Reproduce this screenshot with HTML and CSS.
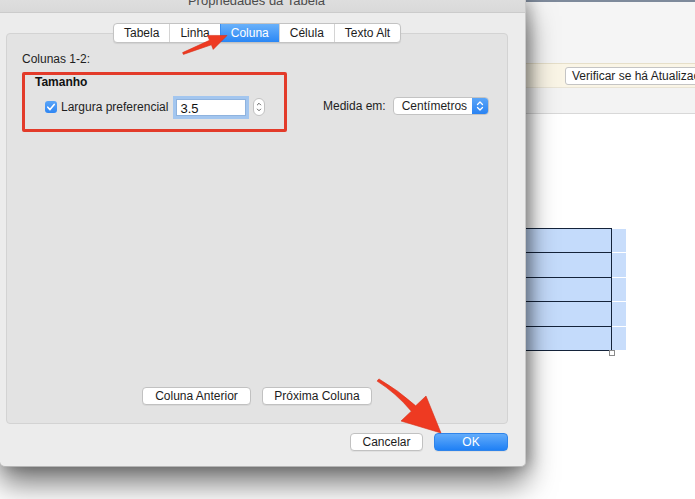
FILE: index.html
```html
<!DOCTYPE html>
<html lang="pt-BR">
<head>
    <meta charset="UTF-8">
    <meta name="viewport" content="width=device-width, initial-scale=1.0">
    <title>Propriedades da Tabela</title>
    <link rel="stylesheet" href="styles.css">
</head>
<body>
    <div class="screen">
        <div class="dialog">
            <div class="titlebar"><span>Propriedades da Tabela</span></div>

            <div class="tabs">
                <span class="tab">Tabela</span>
                <span class="tab">Linha</span>
                <span class="tab active">Coluna</span>
                <span class="tab">Célula</span>
                <span class="tab">Texto Alt</span>
            </div>

            <div class="panel">
                <p class="caption">Colunas 1-2:</p>

                <div class="size-row">
                    <div class="size-group">
                        <div class="group-title">Tamanho</div>
                        <div class="field-row">
                            <span class="check">
                                <svg width="12" height="12" viewBox="0 0 12 12"><path d="M2.8 6.2 L5 8.6 L9.2 3.4" fill="none" stroke="#fff" stroke-width="1.6" stroke-linecap="round" stroke-linejoin="round"/></svg>
                            </span>
                            <span class="label">Largura preferencial</span>
                            <span class="input">3.5</span>
                            <span class="stepper">
                                <svg width="12" height="18" viewBox="0 0 12 18"><path d="M4 6.5 L6 4.5 L8 6.5 M4 11.5 L6 13.5 L8 11.5" fill="none" stroke="#555" stroke-width="1.1" stroke-linecap="round" stroke-linejoin="round"/></svg>
                            </span>
                        </div>
                    </div>

                    <div class="measure">
                        <span class="label">Medida em:</span>
                        <span class="select">
                            <span class="select-text">Centímetros</span>
                            <span class="select-arrows">
                                <svg width="16" height="18" viewBox="0 0 16 18"><path d="M5.5 7.5 L8 5 L10.5 7.5 M5.5 10.5 L8 13 L10.5 10.5" fill="none" stroke="#fff" stroke-width="1.3" stroke-linecap="round" stroke-linejoin="round"/></svg>
                            </span>
                        </span>
                    </div>
                </div>

                <div class="nav-buttons">
                    <span class="btn btn-prev">Coluna Anterior</span>
                    <span class="btn btn-next">Próxima Coluna</span>
                </div>
            </div>

            <div class="footer">
                <span class="btn btn-cancel">Cancelar</span>
                <span class="btn btn-ok">OK</span>
            </div>
        </div>

        <div class="document">
            <div class="doc-top"></div>
            <div class="update-bar"><span class="update-btn">Verificar se há Atualizações</span></div>
            <div class="doc-strip"></div>
            <div class="doc-page">
                <div class="table">
                    <div class="row"><span class="cell"></span><span class="extra"></span></div>
                    <div class="row"><span class="cell"></span><span class="extra"></span></div>
                    <div class="row"><span class="cell"></span><span class="extra"></span></div>
                    <div class="row"><span class="cell"></span><span class="extra"></span></div>
                    <div class="row"><span class="cell"></span><span class="extra"></span></div>
                    <div class="row last"><span class="cell"></span><span class="handle"></span></div>
                </div>
            </div>
        </div>

        <!-- setas de anotação -->
        <svg class="arrows" width="695" height="499" viewBox="0 0 695 499">
            <path d="M182.6 52.6 L209.5 40.3 L207.5 35.4 L227 35.5 L213.2 49.4 L211.4 44.8 L183.4 54.4 Z" fill="#ee3a22" stroke="#d9301a" stroke-width="0.6" stroke-linejoin="round"/>
            <path d="M377.1 381.1 Q396 393 411.3 411.2 L401 421 L441 433 L426 396 L415.7 405.8 Q398 390 378.9 378.9 Z" fill="#ee3a22" stroke="#d9301a" stroke-width="0.6" stroke-linejoin="round"/>
        </svg>
    </div>
</body>
</html>
```

FILE: styles.css
```css
body {
    margin: 0;
    background: #fff;
    font-family: "Liberation Sans", Arial, sans-serif;
    font-size: 12px;
    color: #222;
}
.screen {
    position: relative;
    display: flex;
    width: 695px;
    height: 499px;
    overflow: hidden;
    background: #fff;
}

/* janela de diálogo */
.dialog {
    position: relative;
    z-index: 2;
    display: flex;
    flex-direction: column;
    flex: none;
    width: 526px;
    height: 467px;
    background: #ececec;
    border-right: 1px solid #c9c9c9;
    border-bottom: 1px solid #b5b5b5;
    border-radius: 0 0 5px 5px;
    box-sizing: border-box;
    box-shadow: 0 16px 30px rgba(0, 0, 0, 0.55), 4px 0 14px rgba(0, 0, 0, 0.25);
}
.titlebar {
    height: 12px;
    overflow: hidden;
    padding-right: 12px;
    background: linear-gradient(#dedede, #d9d9d9);
    border-bottom: 1px solid #cbcbcb;
    text-align: center;
    color: #4b4b4b;
    font-size: 13px;
}
.titlebar span {
    display: block;
    line-height: 13px;
    margin-top: -6px;
}

.tabs {
    position: relative;
    z-index: 1;
    display: flex;
    align-self: flex-start;
    margin: 10px 0 0 113px;
    height: 18px;
    background: #fff;
    border: 1px solid #c3c3c3;
    border-radius: 4px;
    overflow: hidden;
    box-shadow: 0 1px 1px rgba(0, 0, 0, 0.08);
}
.tab {
    padding: 0 10px;
    line-height: 18px;
    border-left: 1px solid #d4d4d4;
    color: #1c1c1c;
}
.tab:first-child {
    border-left: none;
}
.tab.active {
    background: linear-gradient(#69b1fa, #2a87f5);
    border-left-color: #3a8ef0;
    color: #fff;
}

.panel {
    display: flex;
    flex-direction: column;
    width: 502px;
    height: 391px;
    margin: -10px 0 0 6px;
    padding: 18px 0 18px 15px;
    background: #e3e3e3;
    border: 1px solid #d3d3d3;
    border-radius: 4px;
    box-sizing: border-box;
}
.caption {
    margin: 0;
    line-height: 15px;
    color: #1e1e1e;
}

.size-row {
    display: flex;
    align-items: flex-start;
    margin-top: 5px;
}
.size-group {
    width: 265px;
    padding: 0 0 11px 10px;
    border: 3px solid #e33b2a;
    border-radius: 2px;
    box-sizing: border-box;
}
.group-title {
    font-weight: bold;
    line-height: 15px;
    color: #111;
}
.field-row {
    display: flex;
    align-items: center;
    height: 22px;
    margin: 6px 0 0 10px;
}
.check {
    display: flex;
    width: 12px;
    height: 12px;
    background: linear-gradient(#5aa5f8, #2f86f3);
    border-radius: 3px;
}
.label {
    line-height: 18px;
    color: #1e1e1e;
}
.field-row .label {
    margin-left: 4px;
}
.input {
    width: 70px;
    height: 17px;
    margin-left: 8px;
    padding-left: 3px;
    line-height: 17px;
    font-size: 13px;
    color: #111;
    background: #fff;
    border: 1px solid #8fb3de;
    box-sizing: border-box;
    box-shadow: 0 0 0 3px #a3c6ef;
}
.stepper {
    display: flex;
    width: 12px;
    height: 18px;
    margin-left: 7px;
    background: #fff;
    border: 1px solid #c2c2c2;
    border-radius: 6px;
    box-sizing: border-box;
    justify-content: center;
    align-items: center;
}

.measure {
    display: flex;
    align-items: center;
    margin: 25px 0 0 36px;
}
.select {
    display: flex;
    width: 96px;
    height: 18px;
    margin-left: 7px;
    background: #fff;
    border: 1px solid #c3c3c3;
    border-radius: 4px;
    box-sizing: border-box;
    overflow: hidden;
}
.select-text {
    flex: 1;
    padding-left: 8px;
    line-height: 16px;
    color: #1e1e1e;
}
.select-arrows {
    display: flex;
    width: 16px;
    align-items: center;
    justify-content: center;
    background: linear-gradient(#5aa5f8, #2a83f2);
}

.btn {
    display: inline-block;
    height: 18px;
    line-height: 16px;
    text-align: center;
    color: #1c1c1c;
    background: #fff;
    border: 1px solid #c1c1c1;
    border-radius: 4px;
    box-sizing: border-box;
    box-shadow: 0 1px 0 rgba(0, 0, 0, 0.05);
}
.nav-buttons {
    display: flex;
    justify-content: center;
    gap: 11px;
    margin-top: auto;
    padding-right: 15px;
}
.btn-prev {
    width: 109px;
}
.btn-next {
    width: 110px;
}
.footer {
    display: flex;
    justify-content: flex-end;
    gap: 11px;
    margin-top: 9px;
    padding-right: 17px;
}
.btn-cancel {
    width: 73px;
}
.btn-ok {
    width: 74px;
    color: #fff;
    background: linear-gradient(#63acfa, #1f80f5);
    border-color: #2f84ea;
}

/* documento ao fundo */
.document {
    flex: 1;
    display: flex;
    flex-direction: column;
    background: #fff;
}
.doc-top {
    height: 63px;
    background: #f5f5f5;
    border-top: 2px solid #7e8a9b;
    box-sizing: border-box;
}
.update-bar {
    display: flex;
    align-items: center;
    height: 25px;
    padding-left: 39px;
    background: #faf5e6;
    border-top: 1px solid #e6dfc9;
    border-bottom: 1px solid #e9e4d6;
    box-sizing: border-box;
}
.update-btn {
    height: 18px;
    padding: 0 6px;
    line-height: 16px;
    white-space: nowrap;
    color: #1e1e1e;
    background: #fff;
    border: 1px solid #c4c4c4;
    border-radius: 3px;
    box-sizing: border-box;
}
.doc-strip {
    height: 25px;
    background: #f3f3f3;
    border-bottom: 1px solid #d8d8d8;
}
.doc-page {
    flex: 1;
    padding-top: 114px;
}
.table {
    display: flex;
    flex-direction: column;
}
.row {
    display: flex;
    height: 24.4px;
}
.cell {
    width: 85px;
    background: #c4dbfb;
    border-top: 1px solid #14233a;
    border-right: 1px solid #14233a;
}
.extra {
    width: 14px;
    background: #c8ddfb;
    border-top: 1px solid #fff;
}
.row.last {
    height: 6px;
}
.row.last .cell {
    background: none;
    border-right: none;
    width: 86px;
}
.handle {
    width: 4px;
    height: 4px;
    margin: 0 0 0 -3px;
    background: #fff;
    border: 1px solid #8a8a8a;
}

.arrows {
    position: absolute;
    top: 0;
    left: 0;
    z-index: 3;
}
```
